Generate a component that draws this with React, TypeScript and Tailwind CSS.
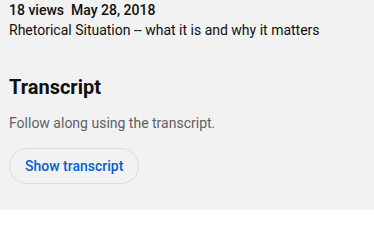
import React from 'react';

const App: React.FC = () => {
  return (
    <div
      className="w-[374px] h-[210px] bg-[#f2f2f2] px-[9px] overflow-hidden"
      style={{ fontFamily: 'Roboto, Arial, sans-serif' }}>
      <div className="text-[14px] leading-[20px] font-medium text-[#0f0f0f]">
        18 views&nbsp; May 28, 2018
      </div>
      <div className="text-[14px] leading-[20px] text-[#0f0f0f]">
        Rhetorical Situation -- what it is and why it matters
      </div>
      <h2 className="mt-[33px] text-[20px] leading-[28px] font-bold text-[#0f0f0f]">
        Transcript
      </h2>
      <p className="mt-[12px] text-[14px] leading-[20px] text-[#606060]">
        Follow along using the transcript.
      </p>
      <button
        type="button"
        className="mt-[15px] h-[36px] px-[15px] rounded-full border border-[#dcdcdc] text-[14px] font-medium text-[#065fd4]">
        Show transcript
      </button>
    </div>
  );
};

export default App;
